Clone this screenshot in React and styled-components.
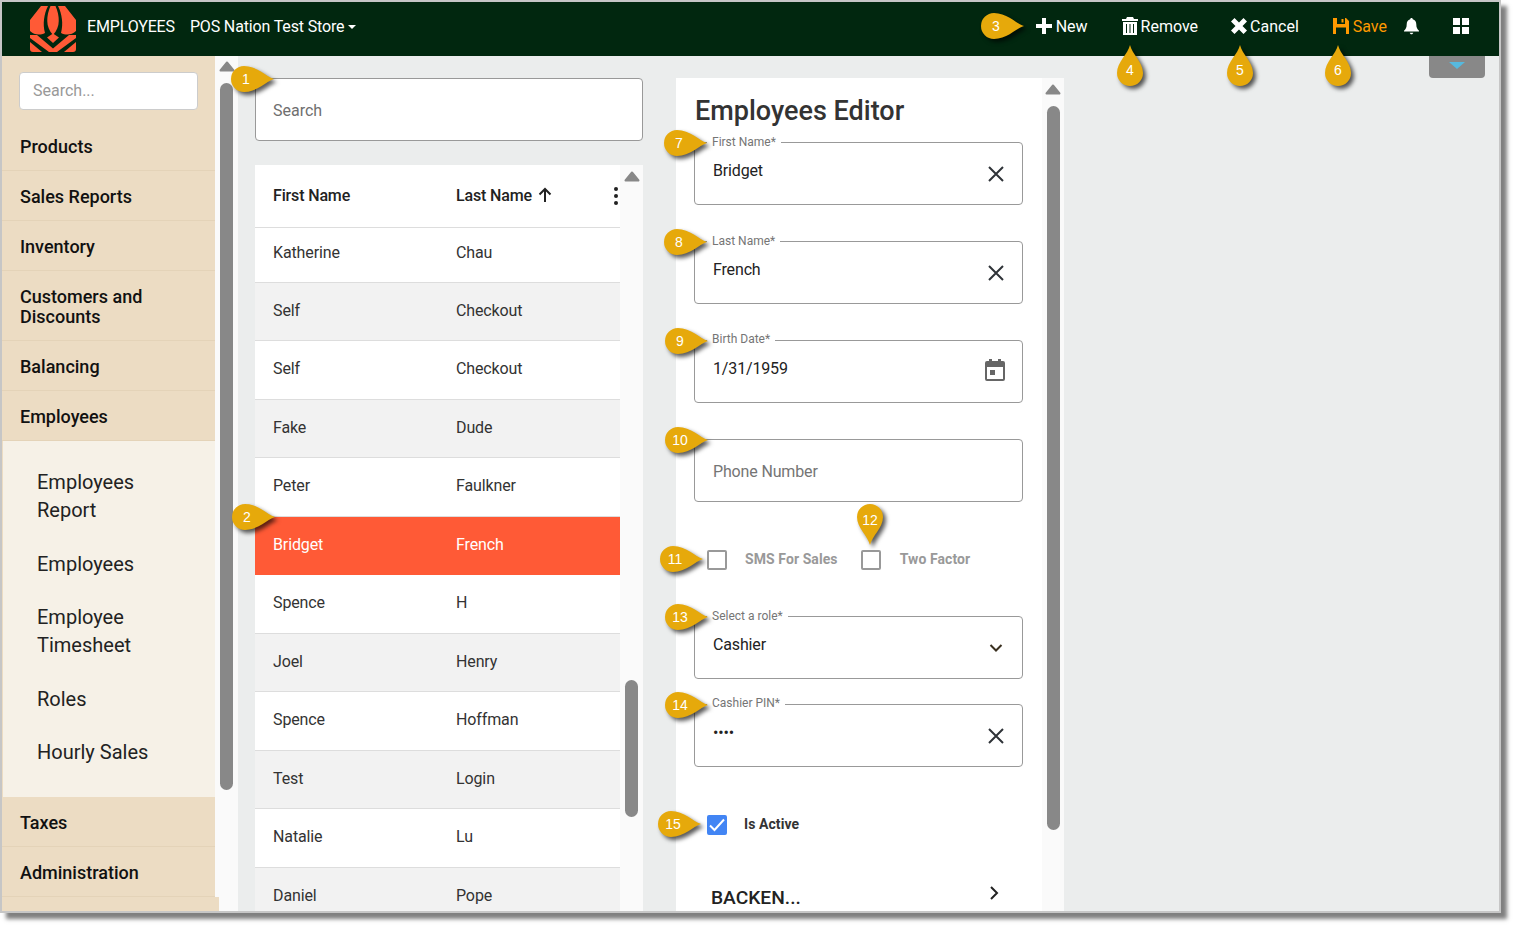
import React from "react";
import styled, { createGlobalStyle } from "styled-components";

const Global = createGlobalStyle`
  html, body { margin: 0; padding: 0; background: #fff; }
  body { font-family: Roboto, "Liberation Sans", sans-serif; height: 928px; overflow: hidden; }
  #root { height: 928px; }
  * { box-sizing: border-box; }
`;

const Frame = styled.div`
  position: relative;
  width: 1501px;
  height: 913px;
  border: 2px solid #c6c6c6;
  box-shadow: 6px 6px 4px rgba(0, 0, 0, 0.5);
  background: #ebeded;
  display: flex;
  flex-direction: column;
`;

const Header = styled.header`
  height: 54px;
  flex: none;
  background: #01270f;
  color: #fff;
  display: flex;
  align-items: center;
  padding: 0 13px 6px 28px;
  font-size: 16px;
`;
const Logo = styled.svg`
  width: 46px;
  height: 46px;
  flex: none;
  margin: 6px 11px 0 0;
`;
const Brand = styled.span`
  margin-right: 15px;
  letter-spacing: -0.15px;
`;
const Store = styled.span`
  letter-spacing: -0.15px;
`;
const Caret = styled.i`
  display: inline-block;
  width: 0;
  height: 0;
  margin-left: 4px;
  vertical-align: middle;
  border-top: 4px solid #fff;
  border-left: 4px solid transparent;
  border-right: 4px solid transparent;
`;
const Actions = styled.nav`
  margin-left: auto;
  display: flex;
  align-items: center;
`;
const Action = styled.span`
  display: flex;
  align-items: center;
  gap: ${(p) => p.$gap ?? 3}px;
  padding-left: ${(p) => p.$pl ?? 17}px;
  padding-right: 17px;
  color: ${(p) => p.$color || "#fff"};
`;
const BellWrap = styled.span`
  display: flex;
  padding-right: 17px;
`;
const Tiles = styled.span`
  display: grid;
  grid-template-columns: 7px 7px;
  grid-auto-rows: 7px;
  gap: 2px;
  margin: 0 17px;
`;
const Tile = styled.i`
  background: #fff;
`;
const DropTab = styled.div`
  position: absolute;
  left: 1427px;
  top: 54px;
  width: 56px;
  height: 22px;
  background: #888;
  border-radius: 0 0 4px 4px;
  z-index: 2;
  &::after {
    content: "";
    position: absolute;
    left: 20px;
    top: 6px;
    border-top: 7px solid #56b9de;
    border-left: 8px solid transparent;
    border-right: 8px solid transparent;
  }
`;

const Body = styled.div`
  flex: 1;
  display: flex;
  min-height: 0;
  overflow: hidden;
`;

const Sidebar = styled.aside`
  width: 213px;
  flex: none;
  background: #ecdcc3;
  padding-top: 16px;
  position: relative;
  z-index: 1;
`;
const SideSearch = styled.div`
  margin: 0 17px 11px;
  width: 179px;
  height: 38px;
  background: #fff;
  border: 1px solid #ccc;
  border-radius: 4px;
  color: #999;
  font-size: 16px;
  line-height: 36px;
  padding-left: 13px;
`;
const SideItem = styled.div`
  padding: 16px 18px 13px;
  font-size: 18px;
  font-weight: 500;
  line-height: 20px;
  color: #111;
  border-bottom: 1px solid #e4d3b8;
`;
const SubMenu = styled.div`
  background: #f6f1e7;
  margin-left: 1px;
  padding: 27px 35px 31px 34px;
  display: flex;
  flex-direction: column;
  gap: 25.5px;
  font-size: 20px;
  line-height: 28px;
  color: #222;
`;
const SideTail = styled.div`
  width: 217px;
  height: 16px;
  background: #ecdcc3;
`;

const Track = styled.div`
  width: ${(p) => p.$w}px;
  flex: none;
  background: #fafafa;
  display: flex;
  flex-direction: column;
  align-items: center;
  padding-top: ${(p) => p.$pt}px;
`;
const TrackArrow = styled.svg`
  display: block;
  width: 16px;
  height: 11px;
  flex: none;
`;
const Thumb = styled.i`
  display: block;
  width: 13px;
  height: ${(p) => p.$h}px;
  margin-top: ${(p) => p.$mt}px;
  background: #888;
  border-radius: 7px;
`;

const Main = styled.main`
  flex: 1;
  display: flex;
  align-items: flex-start;
  gap: 33px;
  padding: 22px 0 0 17px;
  background: #ebeded;
`;
const ListColumn = styled.section`
  width: 388px;
  flex: none;
`;
const ListSearch = styled.div`
  height: 63px;
  background: #fff;
  border: 1px solid #999;
  border-radius: 4px;
  padding-left: 17px;
  line-height: 63px;
  font-size: 16px;
  color: #6f6f6f;
`;
const TableWrap = styled.div`
  margin-top: 24px;
  height: 746px;
  display: flex;
  background: #fff;
  overflow: hidden;
`;
const Table = styled.div`
  flex: 1;
  min-width: 0;
`;
const HeadRow = styled.div`
  height: 63px;
  display: grid;
  grid-template-columns: 183px 1fr auto;
  align-items: center;
  border-bottom: 1px solid #ddd;
  padding: 0 2px 2px 18px;
  font-weight: 500;
  font-size: 16px;
  letter-spacing: -0.15px;
  color: #222;
`;
const HeadCell = styled.span`
  display: flex;
  align-items: center;
  gap: 6px;
`;
const Dots = styled.span`
  display: flex;
  flex-direction: column;
  gap: 2.5px;
  margin-top: 2px;
  & i {
    width: 4.5px;
    height: 4.5px;
    border-radius: 50%;
    background: #222;
  }
`;
const Row = styled.div`
  height: ${(p) => (p.$first ? 54.75 : 58.5)}px;
  display: grid;
  grid-template-columns: 183px 1fr;
  align-items: center;
  padding: 0 0 ${(p) => (p.$first ? 5 : 2.6)}px 18px;
  font-size: 16px;
  letter-spacing: -0.12px;
  color: ${(p) => (p.$sel ? "#fff" : "#333")};
  background: ${(p) => (p.$sel ? "#ff5a36" : p.$alt ? "#f2f2f2" : "#fff")};
  border-bottom: 1px solid ${(p) => (p.$sel ? "#ff5a36" : "#ddd")};
`;

const Editor = styled.section`
  width: 388px;
  height: 833px;
  flex: none;
  display: flex;
  background: #fff;
  overflow: hidden;
`;
const EditorBody = styled.div`
  flex: 1;
  padding: 17px 0 0 18px;
  min-width: 0;
`;
const Title = styled.h1`
  margin: 0 0 15px 1px;
  font-size: 27px;
  line-height: 32px;
  font-weight: 500;
  color: #333;
`;
const Field = styled.div`
  position: relative;
  width: 329px;
  height: 63px;
  margin-top: ${(p) => p.$mt ?? 0}px;
  border: 1px solid #999;
  border-radius: 4px;
  display: flex;
  justify-content: space-between;
  align-items: center;
  padding-right: 18px;
`;
const FieldLabel = styled.label`
  position: absolute;
  left: 12px;
  top: ${(p) => (p.$up ? -9 : -8)}px;
  padding: 0 5px;
  background: #fff;
  font-size: 12px;
  line-height: 14px;
  color: #757575;
`;
const FieldValue = styled.span`
  align-self: flex-start;
  padding: ${(p) => (p.$ph ? 22 : 18)}px 0 0 18px;
  font-size: 16px;
  line-height: 20px;
  letter-spacing: -0.15px;
  color: ${(p) => (p.$ph ? "#757575" : "#222")};
`;
const CheckRow = styled.div`
  display: flex;
  align-items: center;
  margin-top: ${(p) => p.$mt}px;
  margin-left: 13px;
  height: 20px;
`;
const Box = styled.span`
  width: 20px;
  height: 20px;
  flex: none;
  border-radius: 2px;
  border: 2px solid ${(p) => (p.$on ? "#4285f4" : "#999")};
  background: ${(p) => (p.$on ? "#4285f4" : "#fff")};
  display: flex;
  align-items: center;
  justify-content: center;
`;
const CheckLabel = styled.span`
  margin-left: ${(p) => p.$ml ?? 18}px;
  margin-right: 23px;
  padding-bottom: 2px;
  font-size: 14px;
  font-weight: 700;
  letter-spacing: 0.08px;
  color: ${(p) => (p.$on ? "#333" : "#999")};
`;
const Accordion = styled.div`
  margin-top: 51px;
  width: 289px;
  margin-left: 17px;
  display: flex;
  justify-content: space-between;
  font-size: 19.2px;
  line-height: 24px;
  font-weight: 500;
  color: #222;
`;
const AccordionIcon = styled.svg`
  width: 12px;
  height: 16px;
  margin-top: -1px;
`;
const CalendarSvg = styled.svg`
  width: 22px;
  height: 24px;
  margin: -4px -2px 0 0;
`;

const CalloutBox = styled.div`
  position: absolute;
  left: ${(p) => p.$x}px;
  top: ${(p) => p.$y}px;
  width: ${(p) => p.$w}px;
  height: ${(p) => p.$h}px;
  z-index: 5;
`;
const CalloutShape = styled.svg`
  display: block;
  overflow: visible;
  filter: drop-shadow(3px 3px 2px rgba(0, 0, 0, 0.65));
`;
const CalloutNum = styled.span`
  position: absolute;
  width: 28px;
  text-align: center;
  left: ${(p) => p.$l ?? 0}px;
  top: ${(p) => p.$t}px;
  font: 14px/20px "Liberation Sans", Arial, sans-serif;
  color: #fff;
`;

const GOLD = "#e6a90b";
function Callout({ n, cx, cy, dir }) {
  if (dir === "right") {
    return (
      <CalloutBox $x={cx - 16} $y={cy - 13} $w={44} $h={26}>
        <CalloutShape width="44" height="26" viewBox="0 0 44 26">
          <path fill={GOLD} d="M44 13C36 10.500 27 0 14 0A13 13 0 0 0 14 26C27 26 36 15.500 44 13Z" />
        </CalloutShape>
        <CalloutNum $t={3} $l={2}>
          {n}
        </CalloutNum>
      </CalloutBox>
    );
  }
  if (dir === "up") {
    return (
      <CalloutBox $x={cx - 14} $y={cy - 25} $w={28} $h={41}>
        <CalloutShape width="28" height="41" viewBox="0 0 28 41">
          <path fill={GOLD} d="M14 0C16 9 27 17 27 28A13 13 0 0 1 1 28C1 17 12 9 14 0Z" />
        </CalloutShape>
        <CalloutNum $t={15}>{n}</CalloutNum>
      </CalloutBox>
    );
  }
  return (
    <CalloutBox $x={cx - 14} $y={cy - 16} $w={28} $h={41}>
      <CalloutShape width="28" height="41" viewBox="0 0 28 41">
        <path fill={GOLD} d="M14 41C12 32 1 24 1 13A13 13 0 0 1 27 13C27 24 16 32 14 41Z" />
      </CalloutShape>
      <CalloutNum $t={6}>{n}</CalloutNum>
    </CalloutBox>
  );
}

const Arrow = () => (
  <TrackArrow viewBox="0 0 16 11">
    <path d="M8 1.500L14.500 9.500H1.500Z" fill="#888" stroke="#888" strokeWidth="2" strokeLinejoin="round" />
  </TrackArrow>
);
const XIcon = () => (
  <svg width="16" height="16" viewBox="0 0 16 16">
    <path d="M1 1L15 15M15 1L1 15" stroke="#2f3338" strokeWidth="2" fill="none" />
  </svg>
);
const ChevronDown = () => (
  <svg width="16" height="16" viewBox="0 0 16 16">
    <path d="M2.500 5L8 10.500L13.500 5" stroke="#3a3020" strokeWidth="2" fill="none" />
  </svg>
);
const CalendarIcon = () => (
  <CalendarSvg viewBox="0 0 22 24">
    <path fill="#666" fillRule="evenodd" d="M5 1h3v2h6V1h3v2h2a2 2 0 0 1 2 2v16a2 2 0 0 1-2 2H3a2 2 0 0 1-2-2V5a2 2 0 0 1 2-2h2zM3 9v12h16V9z" />
    <rect x="6" y="12" width="5" height="5" fill="#666" />
  </CalendarSvg>
);
const PlusIcon = () => (
  <svg width="16" height="16" viewBox="0 0 16 16">
    <path fill="#fff" d="M6 0h4v6h6v4h-6v6H6v-6H0V6h6z" />
  </svg>
);
const TrashIcon = () => (
  <svg width="16" height="18" viewBox="0 0 16 18">
    <path fill="#fff" d="M5 0h6l1 2h4v2H0V2h4zM1 5h14v13H1zM4 7v9h1V7zM7.500 7v9h1V7zM11 7v9h1V7z" fillRule="evenodd" />
  </svg>
);
const CrossIcon = () => (
  <svg width="16" height="16" viewBox="0 0 16 16">
    <path fill="#fff" d="M3.500 0L8 4.500L12.500 0L16 3.500L11.500 8L16 12.500L12.500 16L8 11.500L3.500 16L0 12.500L4.500 8L0 3.500Z" />
  </svg>
);
const SaveIcon = () => (
  <svg width="16" height="16" viewBox="0 0 16 16">
    <path fill="#f90" fillRule="evenodd" d="M0 0H13L16 3V16H0ZM4 0V6H12V0ZM8.500 1H10.500V4.500H8.500ZM3 9.500V16H13V9.500Z" />
  </svg>
);
const BellIcon = () => (
  <svg width="15" height="17" viewBox="0 0 15 17">
    <path fill="#fff" d="M7.500 0C8.300 0 8.800 .6 8.800 1.300C11 1.900 12.300 3.800 12.300 6.200C12.300 9.500 13.200 11 15 12.800V13.500H0V12.800C1.800 11 2.700 9.500 2.700 6.200C2.700 3.800 4 1.900 6.200 1.300C6.200 .6 6.700 0 7.500 0ZM5.700 14.700H9.300C9.100 15.600 8.400 16.200 7.500 16.200C6.600 16.200 5.900 15.600 5.700 14.700Z" />
  </svg>
);
const SortArrow = () => (
  <svg width="14" height="16" viewBox="0 0 14 16">
    <path d="M7 15V2M1.500 7.500L7 2L12.500 7.500" stroke="#222" strokeWidth="2" fill="none" />
  </svg>
);

const rows = [
  ["Katherine", "Chau"],
  ["Self", "Checkout"],
  ["Self", "Checkout"],
  ["Fake", "Dude"],
  ["Peter", "Faulkner"],
  ["Bridget", "French"],
  ["Spence", "H"],
  ["Joel", "Henry"],
  ["Spence", "Hoffman"],
  ["Test", "Login"],
  ["Natalie", "Lu"],
  ["Daniel", "Pope"],
];

const callouts = [
  [1, 244, 77, "right"],
  [2, 245, 515, "right"],
  [3, 994, 24, "right"],
  [4, 1128, 68, "up"],
  [5, 1238, 68, "up"],
  [6, 1336, 68, "up"],
  [7, 677, 141, "right"],
  [8, 677, 240, "right"],
  [9, 678, 339, "right"],
  [10, 678, 438, "right"],
  [11, 673, 557, "right"],
  [12, 868, 518, "down"],
  [13, 678, 615, "right"],
  [14, 678, 703, "right"],
  [15, 671, 822, "right"],
];

export default function App() {
  return (
    <Frame>
      <Global />
      <Header>
        <Logo viewBox="0 0 46 46">
          <g fill="#ff5a36">
            <path d="M11 0h7C14 8 12.500 18 15 27C10 29.500 4 29 0 25V14z" />
            <path d="M20.500 0h5C29.500 9 31 21 23 29C15 21 16.500 9 20.500 0z" />
            <path d="M35 0h-7C32 8 33.500 18 31 27C36 29.500 42 29 46 25V14z" />
            <path d="M0 29L7 29L23 42.500L39 29L46 29V32L27 46H19L0 32z" />
            <path d="M17 31.500L23 27.500L29 31.500L23 37z" />
            <path d="M0 36L12 46H3Q0 46 0 43z" />
            <path d="M46 36L34 46H43Q46 46 46 43z" />
          </g>
        </Logo>
        <Brand>EMPLOYEES</Brand>
        <Store>
          POS Nation Test Store
          <Caret />
        </Store>
        <Actions>
          <Action $gap={4}>
            <PlusIcon />
            New
          </Action>
          <Action>
            <TrashIcon />
            Remove
          </Action>
          <Action $pl={16}>
            <CrossIcon />
            Cancel
          </Action>
          <Action $color="#ff9900" $gap={4}>
            <SaveIcon />
            Save
          </Action>
          <BellWrap>
            <BellIcon />
          </BellWrap>
          <Tiles>
            <Tile />
            <Tile />
            <Tile />
            <Tile />
          </Tiles>
        </Actions>
      </Header>
      <DropTab />
      <Body>
        <Sidebar>
          <SideSearch>Search...</SideSearch>
          <SideItem>Products</SideItem>
          <SideItem>Sales Reports</SideItem>
          <SideItem>Inventory</SideItem>
          <SideItem>
            Customers and
            <br />
            Discounts
          </SideItem>
          <SideItem>Balancing</SideItem>
          <SideItem>Employees</SideItem>
          <SubMenu>
            <div>
              Employees
              <br />
              Report
            </div>
            <div>Employees</div>
            <div>
              Employee
              <br />
              Timesheet
            </div>
            <div>Roles</div>
            <div>Hourly Sales</div>
          </SubMenu>
          <SideItem>Taxes</SideItem>
          <SideItem>Administration</SideItem>
          <SideTail />
        </Sidebar>
        <Track $w={23} $pt={5}>
          <Arrow />
          <Thumb $h={707} $mt={11} />
        </Track>
        <Main>
          <ListColumn>
            <ListSearch>Search</ListSearch>
            <TableWrap>
              <Table>
                <HeadRow>
                  <HeadCell>First Name</HeadCell>
                  <HeadCell>
                    Last Name
                    <SortArrow />
                  </HeadCell>
                  <Dots>
                    <i />
                    <i />
                    <i />
                  </Dots>
                </HeadRow>
                {rows.map(([a, b], i) => (
                  <Row key={i} $first={i === 0} $alt={i % 2 === 1} $sel={a === "Bridget"}>
                    <span>{a}</span>
                    <span>{b}</span>
                  </Row>
                ))}
              </Table>
              <Track $w={23} $pt={6}>
                <Arrow />
                <Thumb $h={137} $mt={498} />
              </Track>
            </TableWrap>
          </ListColumn>
          <Editor>
            <EditorBody>
              <Title>Employees Editor</Title>
              <Field>
                <FieldLabel>First Name*</FieldLabel>
                <FieldValue>Bridget</FieldValue>
                <XIcon />
              </Field>
              <Field $mt={36}>
                <FieldLabel>Last Name*</FieldLabel>
                <FieldValue>French</FieldValue>
                <XIcon />
              </Field>
              <Field $mt={36}>
                <FieldLabel $up>Birth Date*</FieldLabel>
                <FieldValue>1/31/1959</FieldValue>
                <CalendarIcon />
              </Field>
              <Field $mt={36}>
                <FieldValue $ph>Phone Number</FieldValue>
              </Field>
              <CheckRow $mt={48}>
                <Box />
                <CheckLabel>SMS For Sales</CheckLabel>
                <Box />
                <CheckLabel $ml={19}>Two Factor</CheckLabel>
              </CheckRow>
              <Field $mt={46}>
                <FieldLabel>Select a role*</FieldLabel>
                <FieldValue>Cashier</FieldValue>
                <ChevronDown />
              </Field>
              <Field $mt={25}>
                <FieldLabel $up>Cashier PIN*</FieldLabel>
                <FieldValue>••••</FieldValue>
                <XIcon />
              </Field>
              <CheckRow $mt={48}>
                <Box $on>
                  <svg width="16" height="14" viewBox="0 0 16 14">
                    <path d="M1 7.500L5.500 12L15 1.500" stroke="#fff" strokeWidth="2" fill="none" />
                  </svg>
                </Box>
                <CheckLabel $on $ml={17}>
                  Is Active
                </CheckLabel>
              </CheckRow>
              <Accordion>
                BACKEN...
                <AccordionIcon viewBox="0 0 12 16">
                  <path d="M3 2L9 8L3 14" stroke="#222" strokeWidth="2" fill="none" />
                </AccordionIcon>
              </Accordion>
            </EditorBody>
            <Track $w={22} $pt={6}>
              <Arrow />
              <Thumb $h={724} $mt={11} />
            </Track>
          </Editor>
        </Main>
      </Body>
      {callouts.map(([n, cx, cy, dir]) => (
        <Callout key={n} n={n} cx={cx} cy={cy} dir={dir} />
      ))}
    </Frame>
  );
}
